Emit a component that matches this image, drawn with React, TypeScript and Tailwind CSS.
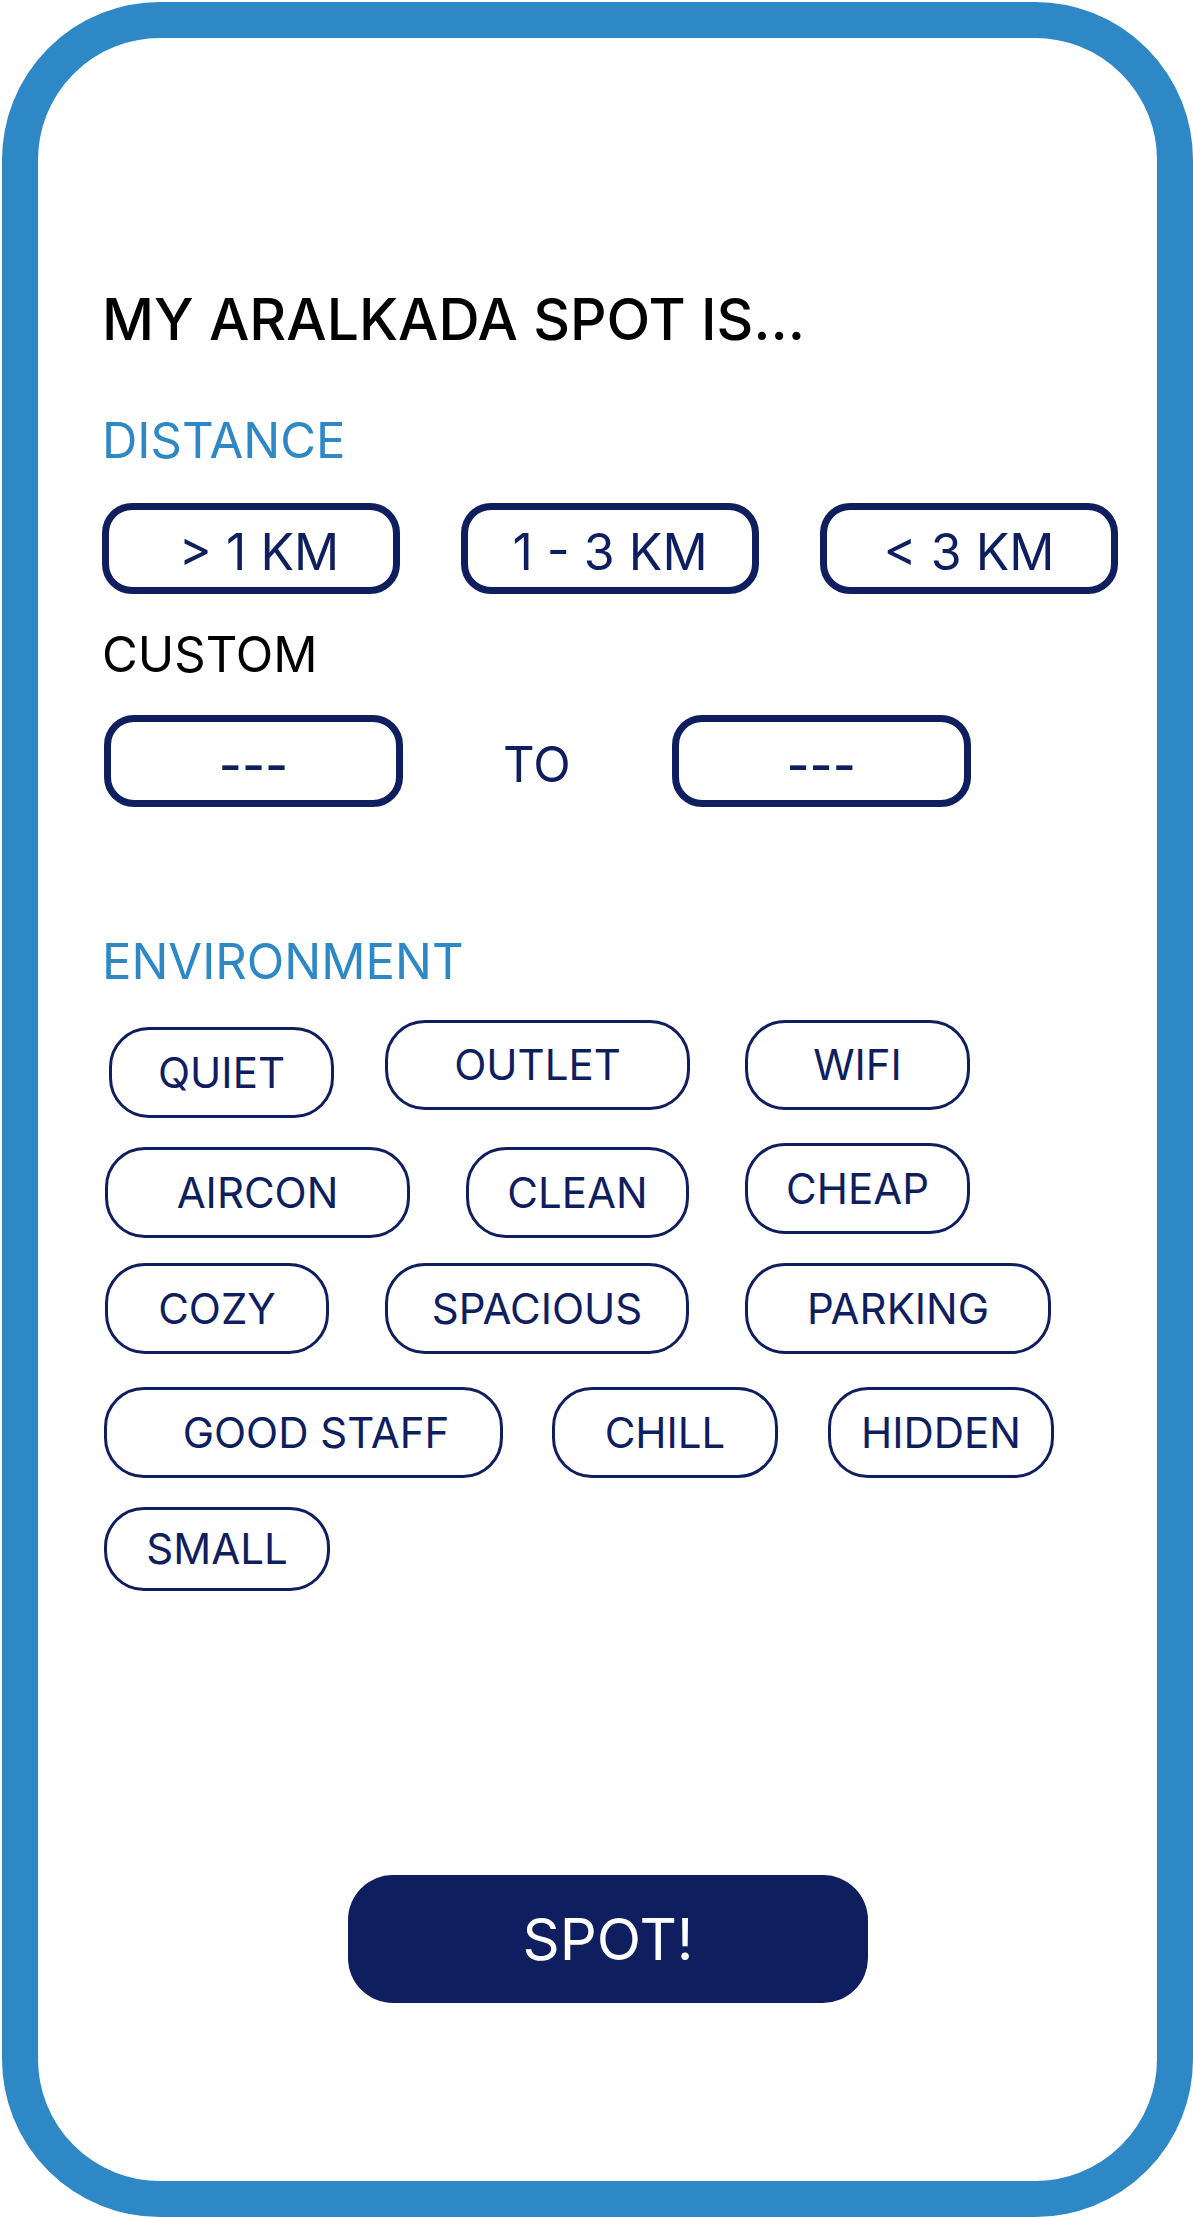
import type { ReactNode } from "react"

function RangeButton({ children, className = "" }: { children: ReactNode; className?: string }) {
  return (
    <button
      className={`rounded-[30px] border-[7px] border-[#0f1e5f] bg-white pt-[7px] text-[50px] leading-none text-[#0f1e5f] flex items-center justify-center ${className}`}
    >
      {children}
    </button>
  )
}

function Tag({ label, className = "" }: { label: string; className?: string }) {
  return (
    <button
      className={`rounded-[40px] border-[3px] border-[#0f1e5f] bg-white text-[42px] leading-none text-[#0f1e5f] flex items-center justify-center shrink-0 ${className}`}
    >
      {label}
    </button>
  )
}

export default function App() {
  return (
    <div className="font-['Inter',sans-serif] bg-white">
      {/* phone frame */}
      <div className="ml-[2px] mt-[2px] h-[2215px] w-[1191px] rounded-[158px] border-[36px] border-[#2e88c6] bg-white pl-[64px] pt-[253px]">
        <h1 className="text-[57px] font-medium leading-none text-black">MY ARALKADA SPOT IS...</h1>

        {/* Distance */}
        <h2 className="mt-[68px] text-[49px] leading-none text-[#2e88c6]">DISTANCE</h2>
        <div className="mt-[38px] flex gap-[61px]">
          <RangeButton className="h-[91px] w-[298px] pl-[16px]">&gt; 1 KM</RangeButton>
          <RangeButton className="h-[91px] w-[298px]">1 - 3 KM</RangeButton>
          <RangeButton className="h-[91px] w-[298px]">&lt; 3 KM</RangeButton>
        </div>

        <h3 className="mt-[36px] text-[49px] leading-none text-black">CUSTOM</h3>
        <div className="mt-[36px] ml-[2px] flex items-center">
          <RangeButton className="h-[92px] w-[299px] font-medium">---</RangeButton>
          <span className="ml-[100px] pt-[6px] text-[49px] leading-none text-[#0f1e5f]">TO</span>
          <RangeButton className="ml-[101px] h-[92px] w-[299px] font-medium">---</RangeButton>
        </div>

        {/* Environment */}
        <h2 className="mt-[130px] text-[49px] leading-none text-[#2e88c6]">ENVIRONMENT</h2>

        <div className="mt-[34px] flex items-start">
          <Tag label="QUIET" className="ml-[7px] mt-[7px] h-[91px] w-[225px]" />
          <Tag label="OUTLET" className="ml-[51px] h-[90px] w-[305px]" />
          <Tag label="WIFI" className="ml-[55px] h-[90px] w-[225px]" />
        </div>

        <div className="mt-[25px] flex items-start">
          <Tag label="AIRCON" className="ml-[3px] mt-[4px] h-[91px] w-[305px]" />
          <Tag label="CLEAN" className="ml-[56px] mt-[4px] h-[91px] w-[223px]" />
          <Tag label="CHEAP" className="ml-[56px] h-[91px] w-[225px]" />
        </div>

        <div className="mt-[25px] flex items-start">
          <Tag label="COZY" className="ml-[3px] h-[91px] w-[224px]" />
          <Tag label="SPACIOUS" className="ml-[56px] h-[91px] w-[304px]" />
          <Tag label="PARKING" className="ml-[56px] h-[91px] w-[306px]" />
        </div>

        <div className="mt-[33px] flex items-start">
          <Tag label="GOOD STAFF" className="ml-[2px] h-[91px] w-[399px] pl-[25px]" />
          <Tag label="CHILL" className="ml-[49px] h-[91px] w-[226px]" />
          <Tag label="HIDDEN" className="ml-[50px] h-[91px] w-[226px]" />
        </div>

        <div className="mt-[29px] flex items-start">
          <Tag label="SMALL" className="ml-[2px] h-[84px] w-[226px]" />
        </div>

        <button className="ml-[246px] mt-[284px] flex h-[128px] w-[520px] items-center justify-center rounded-[45px] bg-[#0f1e5f] text-[58px] leading-none text-white">
          SPOT!
        </button>
      </div>
    </div>
  )
}
